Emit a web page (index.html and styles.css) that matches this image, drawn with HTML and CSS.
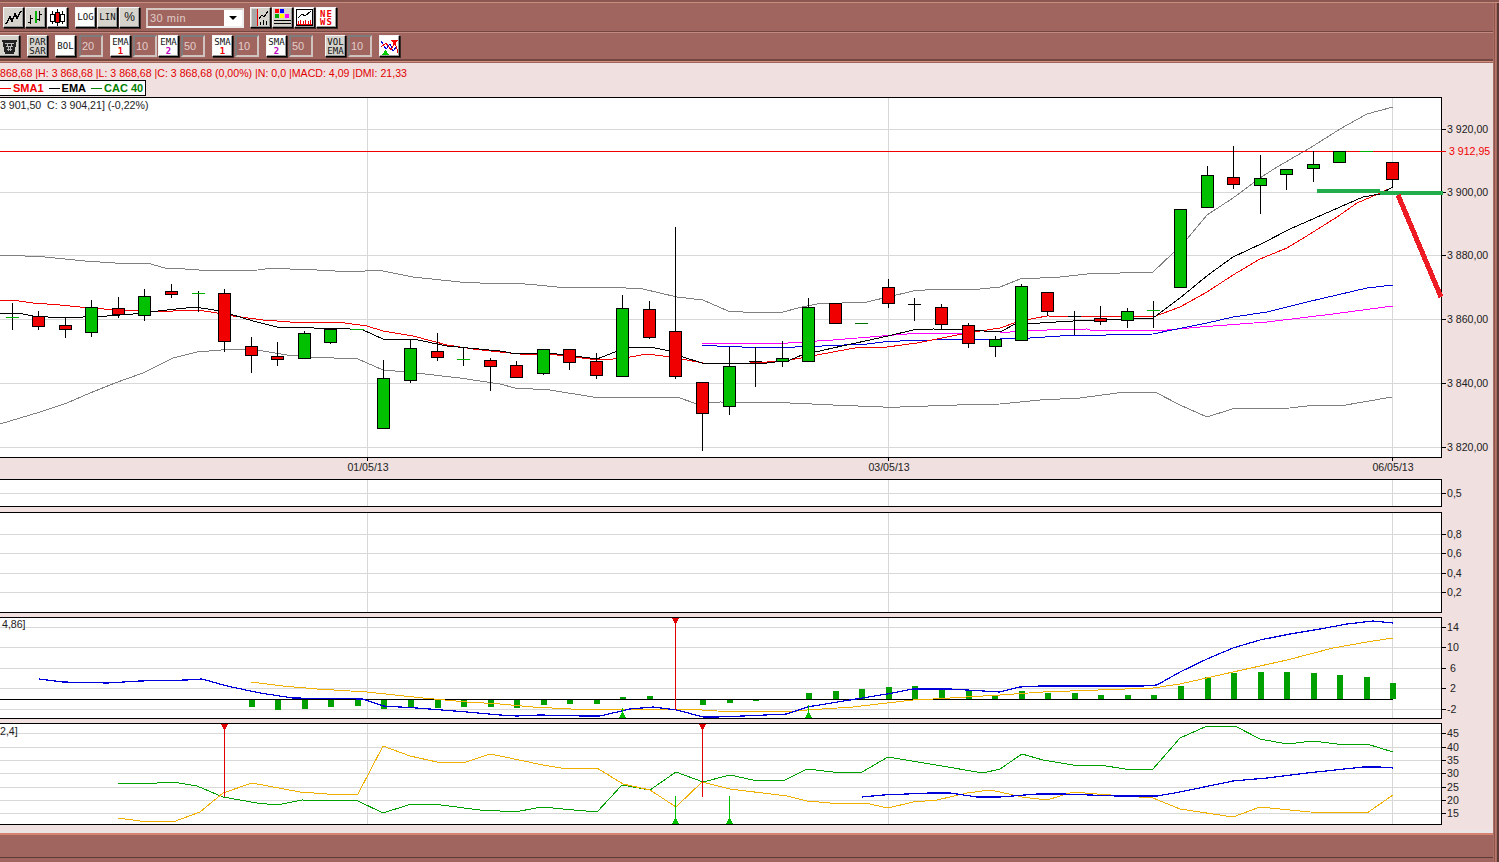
FILE: index.html
```html
<!DOCTYPE html>
<html lang="fr">
<head>
<meta charset="utf-8">
<title>CAC 40 - 30 min</title>
<link rel="stylesheet" href="styles.css">
</head>
<body>
<div class="window">

  <!-- barre 1 : type de graphe, echelle, periode -->
  <div class="toolrow first">
    <button class="tool"><svg viewBox="0 0 19 19"><path class="ink thick" d="M2 16L6 9L8 13L11 6L13 10L17 3"/></svg></button>
    <button class="tool"><svg viewBox="0 0 19 19"><path class="ink" d="M4.500 7V16M2 14H4.500M4.500 10H7M13.500 3V13M11 11H13.500M13.500 6H16"/><path class="ink-green" d="M9.500 3V15"/></svg></button>
    <button class="tool on"><svg viewBox="0 0 19 19"><path class="ink" d="M4.500 3V16M14.500 3V16M9.500 1V18"/><rect class="c-white" x="2.500" y="6.500" width="4" height="7"/><rect class="c-red" x="7.500" y="4.500" width="4" height="10"/><rect class="c-white" x="12.500" y="6.500" width="4" height="7"/></svg></button>
    <button class="tool label on gap">LOG</button>
    <button class="tool label">LIN</button>
    <button class="tool label pct">%</button>
    <div class="select"><span>30 min</span><i class="drop"></i></div>
    <button class="tool"><svg viewBox="0 0 19 19"><rect x="1" y="1" width="5" height="17" fill="#a8a8a8"/><path class="ink" d="M8 11L11 7L13 9L17 3M9.500 17V14M12.500 17V12M15.500 17V13"/><path class="ink-red" d="M6.500 1V18"/></svg></button>
    <button class="tool"><svg viewBox="0 0 19 19"><rect x="2" y="1" width="4" height="4" fill="#f00"/><rect x="7" y="1" width="4" height="4" fill="#00f"/><rect x="2" y="6" width="4" height="4" fill="#0a0"/><rect x="7" y="6" width="4" height="4" fill="#ff0"/><rect x="12" y="6" width="4" height="4" fill="#f0f"/><path class="ink" d="M1 12.500H18M1 15.500H18"/></svg></button>
    <button class="tool on"><svg viewBox="0 0 19 19"><rect class="c-white" x="1.500" y="1.500" width="16" height="16"/><path class="ink" d="M3 10L7 6L10 8L16 3"/><path class="ink-red" d="M3 16V13M5.500 16V12M8 16V13M10.500 16V12M13 16V13M15.500 16V12M2 16.500H17"/></svg></button>
    <button class="tool on news"><b>NE</b><b>WS</b></button>
  </div>

  <!-- barre 2 : indicateurs -->
  <div class="toolrow second">
    <button class="tool bin"><svg viewBox="0 0 19 19"><path d="M2 3H17L14 17H5Z" fill="#222"/><path d="M5 6H14M6 9H13M7 12H12M7 6L9 14M12 6L10 14" stroke="#bbb" fill="none"/></svg></button>
    <button class="tool label two gap">PAR<br>SAR</button>
    <button class="tool label on gap">BOL</button>
    <span class="field near">20</span>
    <button class="tool label two on gap">EMA<br><em class="one">1</em></button>
    <span class="field">10</span>
    <button class="tool label two on tight">EMA<br><em class="deux">2</em></button>
    <span class="field">50</span>
    <button class="tool label two on gap">SMA<br><em class="one">1</em></button>
    <span class="field">10</span>
    <button class="tool label two on gap">SMA<br><em class="deux">2</em></button>
    <span class="field">50</span>
    <button class="tool label two wide">VOL<br>EMA</button>
    <span class="field">10</span>
    <button class="tool on gap"><svg viewBox="0 0 19 19"><path class="ink-blue" d="M1 4L6 12L10 7L13 14L17 9"/><path class="ink-red" d="M1 10L6 6L11 13L15 5L18 16"/><path d="M11 3H18L14.500 8Z" fill="#f00"/><path d="M2 18H9L5.500 13Z" fill="#0c0"/></svg></button>
  </div>

  <div class="work">
    <div class="quote">868,68 |H: 3 868,68 |L: 3 868,68 |C: 3 868,68 (0,00%) |N: 0,0 |MACD: 4,09 |DMI: 21,33</div>
    <div class="legend">
      <span class="sma">SMA1</span>
      <span class="ema">EMA</span>
      <span class="cac">CAC 40</span>
    </div>

    <div class="panes">
      <!-- cours -->
      <svg class="pane" width="1492" height="378" viewBox="0 97 1492 378">
        <rect class="plot" x="-2.500" y="97.500" width="1444" height="360"/>
        <path class="grid" d="M0 129.500H1441M0 192.500H1441M0 255.500H1441M0 319.500H1441M0 383.500H1441M0 447.500H1441M367.500 98V457M888.500 98V457M1392.500 98V457"/>
        <path class="axis" d="M1441 129.500H1446M1441 192.500H1446M1441 255.500H1446M1441 319.500H1446M1441 383.500H1446M1441 447.500H1446M367.500 457V461M888.500 457V461M1392.500 457V461"/>
        <polyline class="boll" points="0,255 25,256 45,257 85,261 115,263 147,263 165,268 185,269 212,271 258,270 272,268 290,269 317,270 352,272 378,270 413,277 460,282 500,284 513,283 537,285 557,287 608,287 643,289 660,293 677,297 703,300 728,311 743,312 783,312 802,307 817,304 867,302 888,297 913,291 937,289 980,289 1000,287 1020,279 1060,277 1087,274 1153,272 1173,253 1187,239 1207,215 1233,198 1260,178 1277,167 1310,148 1340,129 1367,114 1393,107"/>
        <polyline class="boll" points="0,424 20,418 40,412 67,403 90,393 115,383 143,373 173,358 197,352 233,349 257,350 287,355 310,357 358,359 383,370 407,372 460,378 500,384 515,388 550,390 593,397 677,397 697,404 720,402 790,403 833,405 883,407 900,407 957,405 1000,404 1040,400 1080,398 1125,392 1155,392 1180,405 1207,417 1232,409 1290,408 1315,405 1340,406 1392,397"/>
        <polyline class="magenta" points="702,343 788,343 802,342 833,340 870,337 907,334 967,333 1000,333 1020,331 1047,330 1087,329 1090,330 1167,330 1200,327 1267,322 1333,314 1393,306"/>
        <polyline class="blue" points="702,345 717,346 742,347 795,347 822,346 867,344 883,342 900,341 933,340 1000,339 1030,338 1060,336 1153,334 1177,329 1207,323 1233,317 1267,312 1307,302 1367,288 1393,285"/>
        <polyline class="red" points="0,301 12,300 33,303 60,305 90,308 117,310 143,311 173,311 198,310 217,313 233,316 263,320 290,322 337,322 367,326 383,331 413,336 447,345 473,349 500,352 520,354 550,354 557,355 590,359 613,359 630,357 647,354 663,356 687,360 703,363 733,364 767,362 790,360 817,355 860,347 887,347 917,343 967,333 1000,328 1020,321 1047,316 1153,317 1180,307 1207,292 1233,275 1260,259 1287,248 1310,234 1337,217 1357,203 1378,194 1393,187"/>
        <polyline class="black" points="0,313 18,313 33,316 63,318 83,317 107,316 133,314 158,311 195,307 220,311 253,321 277,327 350,329 363,330 383,339 413,339 447,346 500,351 517,354 533,353 557,354 590,358 597,359 615,352 628,348 650,347 670,351 683,357 702,363 733,364 767,363 790,360 802,355 833,348 888,336 913,330 933,329 967,330 1000,332 1017,323 1040,323 1073,321 1153,318 1180,298 1208,275 1233,257 1263,243 1290,229 1340,207 1363,197 1380,194 1393,187"/>
        <path class="price" d="M0 151.500H1446"/>
        <path class="wick" d="M12.500 303V330M38.500 311V330M65.500 318V338M91.500 300V337M118.500 297V318M144.500 289V321M171.500 284V298M198.500 291V312M224.500 289V352M251.500 337V373M277.500 342V366M304.500 331V359M330.500 328V344M383.500 360V429M410.500 339V383M437.500 333V361M463.500 347V366M490.500 358V391M516.500 361V378M543.500 349V375M569.500 349V370M596.500 353V379M622.500 295V377M649.500 301V339M675.500 227V379M702.500 382V451M729.500 347V415M755.500 347V387M782.500 341V367M808.500 298V362M888.500 279V308M914.500 298V321M941.500 304V329M968.500 323V348M995.500 336V357M1021.500 284V341M1047.500 292V316M1074.500 311V335M1100.500 306V325M1127.500 308V328M1153.500 301V328M1207.500 166V208M1233.500 146V189M1260.500 155V214M1286.500 169V190M1313.500 151V182M1392.500 162V187"/>
        <path class="wick" d="M749 361.500H762M908 304.500H921M1068 316.500H1081"/>
        <path class="body-red" d="M32.500 316.500h12v10h-12zM59.500 325.500h12v4h-12zM112.500 308.500h12v6h-12zM165.500 291.500h12v3h-12zM218.500 293.500h12v48h-12zM245.500 346.500h12v9h-12zM271.500 356.500h12v3h-12zM431.500 351.500h12v6h-12zM484.500 360.500h12v6h-12zM510.500 365.500h12v12h-12zM563.500 349.500h12v13h-12zM590.500 361.500h12v14h-12zM643.500 309.500h12v28h-12zM669.500 331.500h12v45h-12zM696.500 382.500h12v31h-12zM829.500 303.500h12v20h-12zM882.500 287.500h12v16h-12zM935.500 307.500h12v17h-12zM962.500 325.500h12v18h-12zM1041.500 292.500h12v19h-12zM1094.500 318.500h12v3h-12zM1227.500 177.500h12v7h-12zM1386.500 162.500h12v17h-12z"/>
        <path class="body-green" d="M85.500 307.500h12v25h-12zM138.500 296.500h12v19h-12zM298.500 333.500h12v25h-12zM324.500 329.500h12v13h-12zM377.500 378.500h12v50h-12zM404.500 348.500h12v32h-12zM537.500 349.500h12v24h-12zM616.500 308.500h12v68h-12zM723.500 366.500h12v40h-12zM776.500 358.500h12v3h-12zM802.500 307.500h12v54h-12zM989.500 339.500h12v7h-12zM1015.500 286.500h12v54h-12zM1121.500 311.500h12v9h-12zM1174.500 209.500h12v78h-12zM1201.500 175.500h12v32h-12zM1254.500 178.500h12v7h-12zM1280.500 169.500h12v5h-12zM1307.500 164.500h12v4h-12zM1333.500 151.500h12v11h-12z"/>
        <path class="doji" d="M6 317.500H19M192 293.500H205M351 329.500H364M457 359.500H470M1147 310.500H1160M1360 151.500H1373"/>
        <path class="doji dark" d="M855 323.500H868"/>
        <path class="trace-green" d="M1317 191H1380M1380 192.500H1443"/>
        <path class="trace-red" d="M1398 195L1441 297"/>
        <text class="lbl" x="0" y="109">3 901,50&#160;&#160;C: 3 904,21] (-0,22%)</text>
        <text class="lbl" x="1447" y="133">3 920,00</text>
        <text class="lbl price-lbl" x="1449" y="155">3 912,95</text>
        <text class="lbl" x="1447" y="196">3 900,00</text>
        <text class="lbl" x="1447" y="259">3 880,00</text>
        <text class="lbl" x="1447" y="323">3 860,00</text>
        <text class="lbl" x="1447" y="387">3 840,00</text>
        <text class="lbl" x="1447" y="451">3 820,00</text>
        <text class="lbl mid" x="368" y="471">01/05/13</text>
        <text class="lbl mid" x="889" y="471">03/05/13</text>
        <text class="lbl mid" x="1393" y="471">06/05/13</text>
      </svg>

      <!-- volume -->
      <svg class="pane" width="1492" height="29" viewBox="0 479 1492 29">
        <rect class="plot" x="-2.500" y="479.500" width="1444" height="27"/>
        <path class="grid" d="M0 493.500H1441M367.500 480V506M888.500 480V506M1392.500 480V506"/>
        <path class="axis" d="M1441 493.500H1446"/>
        <text class="lbl" x="1447" y="497">0,5</text>
      </svg>

      <svg class="pane" width="1492" height="101" viewBox="0 512 1492 101">
        <rect class="plot" x="-2.500" y="512.500" width="1444" height="100"/>
        <path class="grid" d="M0 534.500H1441M0 553.500H1441M0 573.500H1441M0 592.500H1441M367.500 513V612M888.500 513V612M1392.500 513V612"/>
        <path class="axis" d="M1441 534.500H1446M1441 553.500H1446M1441 573.500H1446M1441 592.500H1446"/>
        <text class="lbl" x="1447" y="538">0,8</text>
        <text class="lbl" x="1447" y="557">0,6</text>
        <text class="lbl" x="1447" y="577">0,4</text>
        <text class="lbl" x="1447" y="596">0,2</text>
      </svg>

      <!-- MACD -->
      <svg class="pane" width="1492" height="102" viewBox="0 617 1492 102">
        <rect class="plot" x="-2.500" y="617.500" width="1444" height="101"/>
        <path class="grid" d="M0 627.500H1441M0 647.500H1441M0 668.500H1441M0 688.500H1441M0 709.500H1441M367.500 618V718M888.500 618V718M1392.500 618V718"/>
        <path class="axis" d="M1441 627.500H1446M1441 647.500H1446M1441 668.500H1446M1441 688.500H1446M1441 709.500H1446"/>
        <path class="hist" d="M252 699V707M278 699V710M305 699V709M331 699V707M358 699V706M384 699V709M411 699V707M438 699V708M464 699V707M491 699V707M517 699V708M544 699V705M570 699V704M597 699V704M623 699V697M650 699V696M703 699V705M730 699V703M756 699V701M809 699V693M836 699V691M862 699V689M889 699V687M915 699V686M942 699V689M969 699V691M995 699V695M1022 699V691M1048 699V693M1075 699V693M1101 699V695M1128 699V695M1154 699V695M1181 699V686M1208 699V677M1234 699V673M1261 699V672M1287 699V672M1314 699V673M1340 699V675M1367 699V677M1393 699V683"/>
        <path class="wick" d="M0 699.500H1393"/>
        <polyline class="orange" points="251,682 283,686 317,689 367,692 423,698 467,702 500,704 533,707 590,710 627,709 687,709 717,711 787,712 807,710 853,707 887,703 913,700 933,699 1000,695 1043,692 1153,688 1180,684 1233,672 1287,660 1333,648 1367,642 1393,638"/>
        <polyline class="blue heavy" points="39,679 63,682 107,683 140,681 187,680 202,679 227,686 260,693 293,698 363,699 383,706 417,708 467,712 500,715 517,716 540,715 583,716 600,716 630,709 653,707 677,710 703,717 717,717 743,716 787,714 807,707 850,700 887,694 913,689 950,689 1000,692 1020,687 1040,686 1143,686 1157,685 1180,672 1207,659 1233,648 1260,640 1290,634 1320,629 1347,624 1373,621 1393,623"/>
        <path class="signal-red" d="M675.500 620V710"/>
        <path class="tri-red" d="M672 618H679L675.500 625Z"/>
        <path class="signal-green" d="M622.500 708V714M808.500 705V714"/>
        <path class="tri-green" d="M619 718H626L622.500 711ZM805 718H812L808.500 711Z"/>
        <text class="lbl" x="2" y="628">4,86]</text>
        <text class="lbl" x="1447" y="631">14</text>
        <text class="lbl" x="1447" y="651">10</text>
        <text class="lbl" x="1450" y="672">6</text>
        <text class="lbl" x="1450" y="692">2</text>
        <text class="lbl" x="1447" y="713">-2</text>
      </svg>

      <!-- DMI -->
      <svg class="pane" width="1492" height="102" viewBox="0 723 1492 102">
        <rect class="plot" x="-2.500" y="723.500" width="1444" height="101"/>
        <path class="grid" d="M0 733.500H1441M0 747.500H1441M0 760.500H1441M0 773.500H1441M0 787.500H1441M0 800.500H1441M0 813.500H1441M367.500 724V824M888.500 724V824M1392.500 724V824"/>
        <path class="axis" d="M1441 733.500H1446M1441 747.500H1446M1441 760.500H1446M1441 773.500H1446M1441 787.500H1446M1441 800.500H1446M1441 813.500H1446"/>
        <polyline class="dmi-green" points="118,783 157,783 163,782 173,782 197,786 223,797 257,803 277,805 302,800 358,801 383,813 408,805 433,804 480,810 500,811 520,811 542,807 563,809 597,812 622,785 650,790 676,772 703,782 730,775 753,780 783,781 807,769 833,772 862,772 888,757 930,764 983,773 1000,769 1022,754 1043,760 1073,765 1100,765 1125,769 1153,769 1180,738 1207,726 1235,726 1260,739 1287,744 1313,741 1337,744 1367,744 1393,752"/>
        <polyline class="orange" points="118,818 140,821 173,822 200,812 223,793 252,783 300,792 327,794 358,794 383,746 410,756 437,762 463,763 490,754 500,756 543,765 567,769 597,768 623,784 650,790 676,807 702,782 730,789 787,796 807,801 830,803 865,803 888,808 913,802 937,800 967,793 990,790 1000,792 1022,797 1047,800 1073,792 1097,794 1153,798 1180,809 1233,817 1260,807 1310,812 1367,813 1393,795"/>
        <polyline class="blue heavy" points="862,797 883,795 930,793 950,793 977,797 1000,797 1037,794 1063,794 1117,796 1157,796 1180,792 1233,781 1267,778 1307,773 1363,767 1380,767 1393,768"/>
        <path class="signal-red" d="M224.500 726V797M702.500 726V797"/>
        <path class="tri-red" d="M221 724H228L224.500 731ZM699 724H706L702.500 731Z"/>
        <path class="signal-green" d="M675.500 796V820M729.500 796V820"/>
        <path class="tri-green" d="M672 824H679L675.500 817ZM726 824H733L729.500 817Z"/>
        <text class="lbl" x="0" y="735">2,4]</text>
        <text class="lbl" x="1447" y="737">45</text>
        <text class="lbl" x="1447" y="751">40</text>
        <text class="lbl" x="1447" y="764">35</text>
        <text class="lbl" x="1447" y="777">30</text>
        <text class="lbl" x="1447" y="791">25</text>
        <text class="lbl" x="1447" y="804">20</text>
        <text class="lbl" x="1447" y="817">15</text>
      </svg>
    </div>
  </div>

  <div class="status"></div>
</div>
</body>
</html>
```

FILE: styles.css
```css
* {
  box-sizing: border-box;
}

html, body {
  margin: 0;
  height: 100%;
  overflow: hidden;
}

body {
  background-color: #a0655f;
  font-family: "Liberation Sans", Arial, sans-serif;
  font-size: 10.6px;
}

.window {
  width: 1499px;
  height: 862px;
  display: flex;
  flex-direction: column;
  border-top: 2px solid #8a5650;
  box-shadow: inset 0 1px 0 #c98d80;
  background: linear-gradient(90deg, #a0655f 1493px, #b8796e 1493px, #7b4a44 1495px, #c47a6c 1495px, #a0655f 1497px, #5c3a36 1497px);
}

/* barres d'outils */
.toolrow {
  display: flex;
  align-items: flex-start;
  gap: 1px;
  margin-right: 6px;
  flex: none;
}

.toolrow.first {
  height: 30px;
  padding: 5px 0 0 3px;
  border-bottom: 1px solid #74463f;
  box-shadow: 0 1px 0 #c08a80;
}

.toolrow.second {
  height: 29px;
  padding: 3px 0 0 0;
  border-bottom: 2px solid #74463f;
  box-shadow: 0 1px 0 #d09080;
}

.tool {
  width: 21px;
  height: 21px;
  padding: 0;
  margin: 0;
  flex: none;
  background: #d6d3cc;
  border: 1px solid;
  border-color: #f4f4f4 #000 #000 #f4f4f4;
  box-shadow: 1px 1px 0 #3a2a28, inset -1px -1px 0 #999;
  color: #111;
  display: flex;
  align-items: center;
  justify-content: center;
}

.toolrow.second .tool {
  height: 22px;
}

.tool svg {
  width: 19px;
  height: 19px;
  display: block;
}

.tool svg * {
  shape-rendering: crispEdges;
}

.tool.on {
  background: #fff;
}

.tool.label {
  font-family: "DejaVu Sans Mono", monospace;
  font-size: 9px;
  line-height: 9px;
  text-align: center;
}

.tool.label.pct {
  font-family: "Liberation Sans", Arial, sans-serif;
  font-size: 12px;
}

.tool.bin {
  margin-left: -1px;
}

.tool.two {
  display: block;
  padding-top: 1px;
}

.tool em {
  font-style: normal;
  font-weight: bold;
}

.one {
  color: #f00000;
}

.deux {
  color: #c000c0;
}

.gap {
  margin-left: 6px;
}

.tool.gap.on, .tool.two.gap {
  margin-left: 6px;
}

.tight {
  margin-left: 0;
}

.wide {
  margin-left: 11px;
}

.news {
  flex-direction: column;
  font-family: "DejaVu Sans Mono", monospace;
  font-size: 9px;
  line-height: 8px;
  color: #f00000;
}

.news b {
  letter-spacing: 1px;
}

.field {
  width: 24px;
  height: 22px;
  margin-left: 1px;
  padding-left: 1px;
  flex: none;
  background: #a0655f;
  border: 2px solid;
  border-color: #7c7c7c #d0c4c0 #d0c4c0 #7c7c7c;
  color: #e0cdca;
  font-size: 11px;
  line-height: 18px;
}

.field.near {
  margin-left: 2px;
}

.select {
  width: 98px;
  height: 20px;
  margin: 1px 5px 0 5px;
  display: flex;
  background: #a0655f;
  border: 2px solid;
  border-color: #d8c8c4 #eee #eee #d8c8c4;
  color: #e0cdca;
  font-size: 11px;
  line-height: 16px;
  letter-spacing: 0.5px;
}

.select span {
  flex: 1;
  padding-left: 2px;
}

.drop {
  width: 18px;
  background: #fff;
  position: relative;
}

.drop::after {
  content: "";
  position: absolute;
  left: 5px;
  top: 6px;
  border: 4px solid transparent;
  border-top: 4px solid #000;
  border-bottom: 0;
}

/* zone de travail */
.work {
  flex: 1;
  margin-right: 6px;
  margin-top: 2px;
  background: #f0e0e0;
  border-bottom: 3px solid #ebe4e4;
  padding-top: 3px;
}

.quote {
  height: 14px;
  line-height: 14px;
  color: #e00000;
  white-space: nowrap;
}

.legend {
  width: 146px;
  height: 16px;
  display: flex;
  background: #fff;
  border: 1px solid #000;
  border-left: 0;
  font-size: 11px;
  font-weight: bold;
  line-height: 14px;
  white-space: nowrap;
}

.legend span {
  display: flex;
  flex: none;
  align-items: center;
  margin-right: 5px;
}

.legend span::before {
  content: "";
  width: 11px;
  height: 1px;
  margin-right: 2px;
  background: currentColor;
}

.sma {
  color: #f00000;
  margin-right: 6px;
}

.ema {
  color: #000;
}

.cac {
  color: #008000;
}

.panes {
  margin-top: 1px;
  display: flex;
  flex-direction: column;
  gap: 4px;
}

.pane {
  display: block;
  flex: none;
}

.status {
  height: 29px;
  flex: none;
  margin-right: 6px;
  border-top: 2px solid #d88272;
  background: #a0655f;
  box-shadow: inset 0 -4px 0 #a0655f, inset 0 -5px 0 #5c3a36;
}

/* traces */
.pane path, .pane polyline, .pane rect {
  shape-rendering: crispEdges;
}

.plot {
  fill: #fff;
  stroke: #000;
}

.grid {
  stroke: #d8d8d8;
  fill: none;
}

.axis {
  stroke: #000;
  fill: none;
}

.boll, .magenta, .blue, .red, .black, .orange, .dmi-green {
  fill: none;
  stroke-width: 1;
}

.boll {
  stroke: #808080;
}

.magenta {
  stroke: #ff00ff;
}

.blue {
  stroke: #0000d8;
}

.blue.heavy {
  stroke-width: 1.2;
}

.red {
  stroke: #f00000;
}

.black {
  stroke: #000;
}

.orange {
  stroke: #f0b000;
}

.dmi-green {
  stroke: #00a000;
}

.price {
  stroke: #f00000;
}

.wick {
  stroke: #000;
  fill: none;
}

.body-red {
  fill: #f00000;
  stroke: #000;
}

.body-green {
  fill: #00c000;
  stroke: #000;
}

.doji {
  stroke: #00b000;
  fill: none;
}

.doji.dark {
  stroke: #007000;
}

.trace-green {
  stroke: #22ac4c;
  stroke-width: 4;
  fill: none;
}

.trace-red {
  stroke: #ed1c24;
  stroke-width: 5;
  fill: none;
}

.hist {
  stroke: #00a000;
  stroke-width: 6;
  fill: none;
}

.signal-red {
  stroke: #e00000;
}

.signal-green {
  stroke: #00c000;
}

.tri-red {
  fill: #e00000;
}

.tri-green {
  fill: #00c000;
}

.lbl {
  font-family: "Liberation Sans", Arial, sans-serif;
  font-size: 10.6px;
  fill: #222;
}

.lbl.mid {
  text-anchor: middle;
}

.price-lbl {
  fill: #f00000;
}

/* icones */
.ink, .ink-red, .ink-green, .ink-blue {
  fill: none;
  stroke-width: 1;
}

.ink {
  stroke: #000;
}

.ink.thick {
  stroke-width: 1.5;
}

.ink-red {
  stroke: #f00000;
}

.ink-green {
  stroke: #00b000;
  stroke-width: 2;
}

.ink-blue {
  stroke: #0000d8;
}

.c-white {
  fill: #fff;
  stroke: #000;
}

.c-red {
  fill: #f00000;
  stroke: #000;
}
```
